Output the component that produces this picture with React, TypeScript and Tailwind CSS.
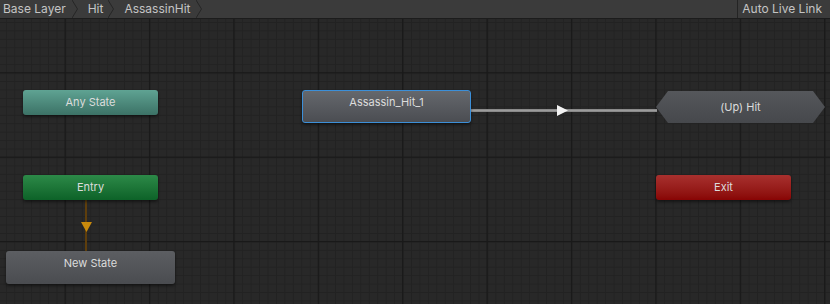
import React from 'react';

const Crumb: React.FC<{ label: string; first?: boolean }> = ({ label, first }) => (
    <div className="flex items-center h-full">
        <span className={first ? 'pl-[3px] pr-[6px]' : 'pl-[5px] pr-[5px]'}>{label}</span>
        <svg width="11" height="18" viewBox="0 0 11 18" className="shrink-0">
            <polyline points="0,0 5.5,9 0,18" fill="none" stroke="#262626" strokeWidth="1" />
        </svg>
    </div>
);

const GridBackground: React.FC = () => (
    <svg className="absolute inset-0" width="830" height="285">
        <defs>
            <pattern id="minor" width="8.44" height="8.44" x="5.9" y="2.96" patternUnits="userSpaceOnUse">
                <path d="M0 0.5 H8.44 M0.5 0 V8.44" stroke="#222222" strokeWidth="1" fill="none" />
            </pattern>
            <pattern id="major" width="84.4" height="84.4" x="64.5" y="53.2" patternUnits="userSpaceOnUse">
                <path d="M0 0.6 H84.4 M0.6 0 V84.4" stroke="#191919" strokeWidth="1.4" fill="none" />
            </pattern>
        </defs>
        <rect width="830" height="285" fill="#282828" />
        <rect width="830" height="285" fill="url(#minor)" />
        <rect width="830" height="285" fill="url(#major)" />
    </svg>
);

const nodeText = "flex items-center justify-center text-[11px] text-[#dcdcdc] rounded-[3px] shadow-[0_2px_3px_rgba(0,0,0,0.45)]";

export default function App() {
    return (
        <div className="w-[830px] h-[304px] bg-[#282828] overflow-hidden font-['Inter','Liberation_Sans',sans-serif]">
            {/* Breadcrumb bar */}
            <div className="h-[19px] flex items-center justify-between bg-[#3b3b3b] border-b border-[#1c1c1c] text-[12px] text-[#c4c4c4]">
                <div className="flex items-center h-full">
                    <Crumb label="Base Layer" first />
                    <Crumb label="Hit" />
                    <Crumb label="AssassinHit" />
                </div>
                <div className="h-full flex items-center border-l border-[#242424] pl-[4px] pr-[8px]">
                    Auto Live Link
                </div>
            </div>

            {/* Graph canvas */}
            <div className="relative h-[285px]">
                <GridBackground />

                {/* Transition Assassin_Hit_1 -> (Up) Hit */}
                <div className="absolute left-[471px] top-[90px] w-[186px] h-[3px] bg-[#9c9c9c] border-y border-[#8a8a8a]" />
                <svg className="absolute left-[557px] top-[86px]" width="12" height="11" viewBox="0 0 12 11">
                    <polygon points="0,0 11,5.5 0,11" fill="#f2f2f2" />
                </svg>

                {/* Entry -> New State */}
                <div className="absolute left-[85px] top-[181px] w-[2px] h-[52px] bg-[#5e3e0c]" />
                <svg className="absolute left-[81px] top-[203px]" width="11" height="10" viewBox="0 0 11 10">
                    <polygon points="0,0 11,0 5.5,10" fill="#c98a0c" />
                </svg>

                <div className={`absolute left-[23px] top-[71px] w-[135px] h-[25px] bg-gradient-to-b from-[#5fa393] to-[#3c7266] ${nodeText}`}>
                    Any State
                </div>

                <div className={`absolute left-[23px] top-[156px] w-[135px] h-[25px] bg-gradient-to-b from-[#2c8a48] to-[#0c6228] ${nodeText}`}>
                    Entry
                </div>

                <div className={`absolute left-[6px] top-[232px] w-[169px] h-[33px] pb-[8px] bg-gradient-to-b from-[#5c5e62] to-[#4a4c50] ${nodeText}`}>
                    New State
                </div>

                <div className={`absolute left-[302px] top-[71px] w-[169px] h-[33px] pb-[8px] border border-[#3c8fd8] bg-gradient-to-b from-[#65686d] to-[#4b4d52] ${nodeText} shadow-[0_0_4px_1px_rgba(60,143,216,0.7)]`}>
                    Assassin_Hit_1
                </div>

                <div className="absolute left-[656px] top-[72px] w-[169px] h-[32px] flex items-center justify-center text-[11px] text-[#dcdcdc] bg-gradient-to-b from-[#55575b] to-[#46484c] [clip-path:polygon(0_50%,12px_0,calc(100%-12px)_0,100%_50%,calc(100%-12px)_100%,12px_100%)]">
                    (Up) Hit
                </div>

                <div className={`absolute left-[656px] top-[156px] w-[135px] h-[25px] bg-gradient-to-b from-[#a8302e] to-[#880404] ${nodeText}`}>
                    Exit
                </div>
            </div>
        </div>
    );
}
